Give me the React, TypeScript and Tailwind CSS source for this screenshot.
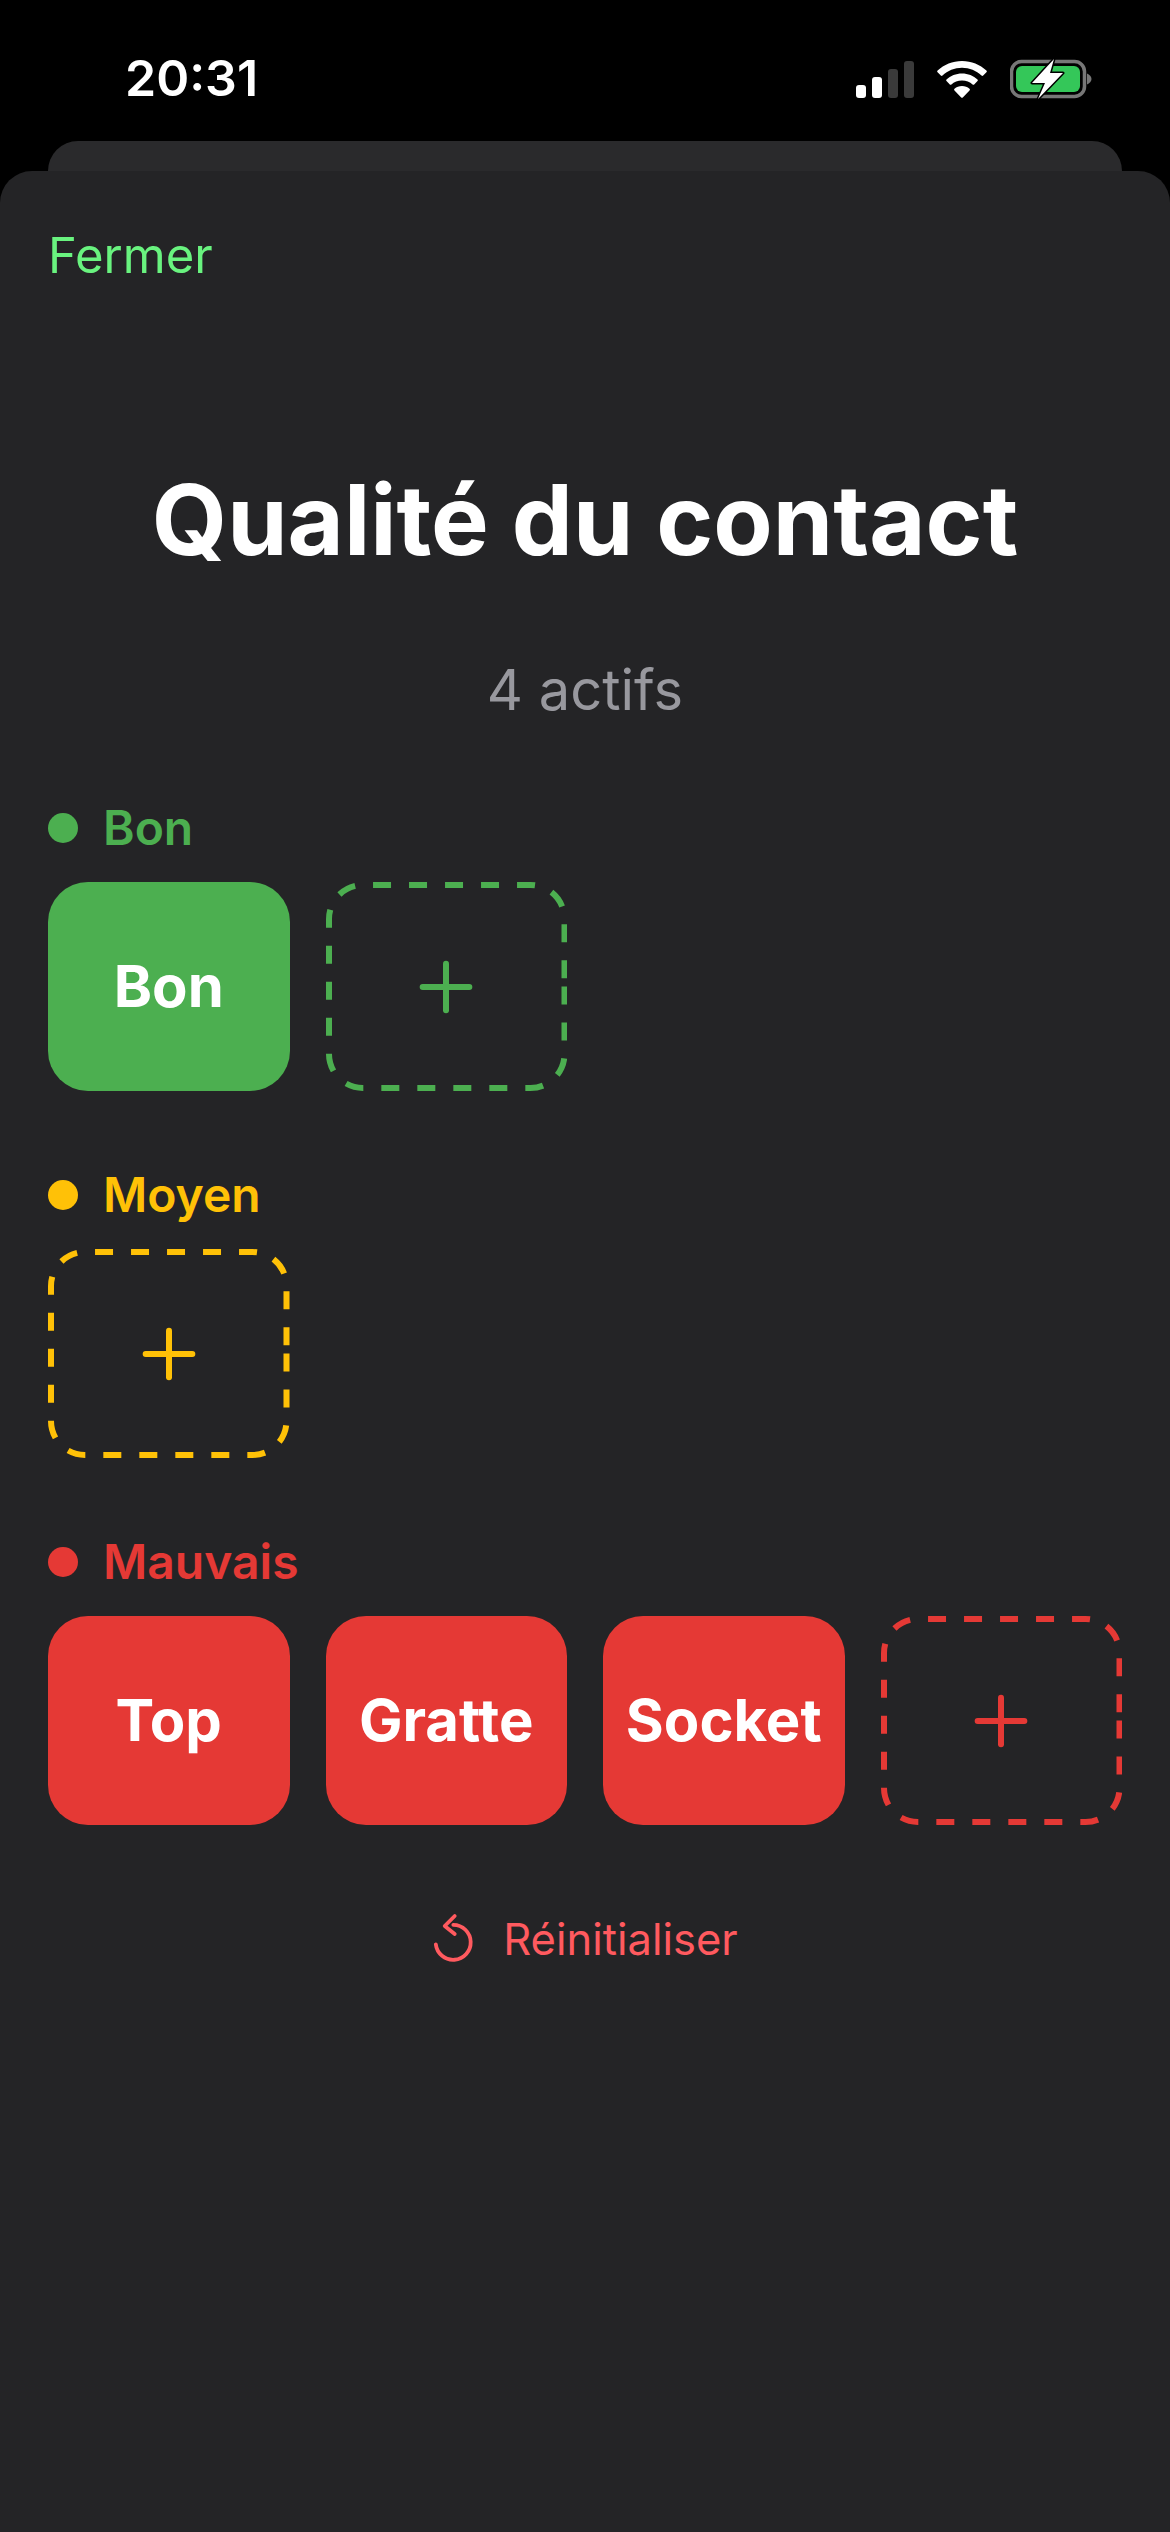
import React from 'react';
import { Plus } from 'lucide-react';

const StatusIcons = () => (
  <div className="flex items-end gap-[23px]">
    <div className="flex items-end gap-[6px]">
      <div className="w-[10px] h-[13px] rounded-[3px] bg-white" />
      <div className="w-[10px] h-[21px] rounded-[3px] bg-white" />
      <div className="w-[10px] h-[29px] rounded-[3px] bg-[#3a3a3a]" />
      <div className="w-[10px] h-[37px] rounded-[3px] bg-[#3a3a3a]" />
    </div>
    <svg width="50" height="37" viewBox="0 0 50 37" fill="#fff">
      <path d="M25 0C15.500 0 7 3.600 0.600 9.600a1.200 1.200 0 0 0 0 1.700l3.200 3.300a1.200 1.200 0 0 0 1.700 0C10.700 9.700 17.500 6.800 25 6.800s14.300 2.900 19.500 7.800a1.200 1.200 0 0 0 1.700 0l3.200-3.300a1.200 1.200 0 0 0 0-1.700C43 3.600 34.500 0 25 0z" />
      <path d="M25 12.400c-6 0-11.400 2.300-15.500 6a1.200 1.200 0 0 0 0 1.700l3.300 3.300a1.200 1.200 0 0 0 1.600 0c2.700-2.400 6.400-3.900 10.600-3.900s7.900 1.500 10.600 3.900a1.200 1.200 0 0 0 1.600 0l3.300-3.300a1.200 1.200 0 0 0 0-1.700c-4.100-3.700-9.500-6-15.500-6z" />
      <path d="M25 25c-2.900 0-5.500 1-7.500 2.800a1.100 1.100 0 0 0 0 1.600l6.700 7a1.100 1.100 0 0 0 1.600 0l6.700-7a1.100 1.100 0 0 0 0-1.600C30.500 26 27.900 25 25 25z" />
    </svg>
    <svg width="82" height="40" viewBox="0 0 82 40" className="mb-[-1px]">
      <rect x="1.500" y="2.500" width="73" height="35" rx="10" fill="none" stroke="#777" strokeWidth="3.500" />
      <rect x="6" y="7" width="64" height="26" rx="6" fill="#34c759" />
      <path d="M77 14.500c2.500 1 4.500 3 4.500 5.500s-2 4.500-4.500 5.500z" fill="#777" />
      <path d="M44 0 L22 24 H35 L28 40 L53 14 H40 Z" fill="#fff" stroke="#000" strokeWidth="3" strokeLinejoin="round" paintOrder="stroke" />
    </svg>
  </div>
);

const Tile = ({ label, bg }: { label: string; bg: string }) => (
  <button className={`h-[209px] rounded-[40px] flex items-center justify-center text-white text-[58px] font-bold ${bg}`}>{label}</button>
);

// dashed outline starts at the middle of the right edge, like the native border
const AddTile = ({ text }: { text: string }) => (
  <button className={`relative h-[209px] flex items-center justify-center ${text}`}>
    <svg className="absolute inset-0" width="241.5" height="209" viewBox="0 0 241.5 209" fill="none" stroke="currentColor" strokeWidth="6" strokeDasharray="18 18">
      <path d="M238.500 104.500V172A34 34 0 0 1 204.500 206H37A34 34 0 0 1 3 172V37A34 34 0 0 1 37 3H204.500A34 34 0 0 1 238.500 37V104.500" />
    </svg>
    <Plus size={80} strokeWidth={1.8} />
  </button>
);

const Section = ({ name, dot, text, children }: { name: string; dot: string; text: string; children: React.ReactNode }) => (
  <section>
    <div className="flex items-center gap-[25px] h-[54px]">
      <div className={`w-[30px] h-[30px] rounded-full ${dot}`} />
      <span className={`text-[48px] font-semibold ${text}`}>{name}</span>
    </div>
    <div className="grid grid-cols-4 gap-x-[36px] mt-[27px]">{children}</div>
  </section>
);

export default function App() {
  return (
    <div className="w-[1170px] h-[2532px] bg-black flex flex-col overflow-hidden font-['Inter',sans-serif]">
      <div className="h-[141px] flex items-start justify-between pl-[125px] pr-[78px] pt-[48px]">
        <span className="text-[50px] leading-[60px] font-semibold text-white">20:31</span>
        <div className="mt-[11px]"><StatusIcons /></div>
      </div>
      <div className="h-[30px] mx-[48px] rounded-t-[30px] bg-[#2a2a2c]" />
      <div className="flex-1 rounded-t-[32px] bg-[#242426] px-[48px]">
        <button className="block mt-[56px] text-[49px] leading-[58px] text-[#69f37f]">Fermer</button>
        <h1 className="mt-[177px] text-center text-[97px] leading-[116px] font-bold text-white">Qualité du contact</h1>
        <p className="mt-[78px] text-center text-[56px] leading-[68px] text-[#98989e]">4 actifs</p>
        <div className="mt-[77px] flex flex-col gap-[77px]">
          <Section name="Bon" dot="bg-[#4caf50]" text="text-[#4caf50]">
            <Tile label="Bon" bg="bg-[#4caf50]" />
            <AddTile text="text-[#4caf50]" />
          </Section>
          <Section name="Moyen" dot="bg-[#ffc107]" text="text-[#ffc107]">
            <AddTile text="text-[#ffc107]" />
          </Section>
          <Section name="Mauvais" dot="bg-[#e53935]" text="text-[#e53935]">
            <Tile label="Top" bg="bg-[#e53935]" />
            <Tile label="Gratte" bg="bg-[#e53935]" />
            <Tile label="Socket" bg="bg-[#e53935]" />
            <AddTile text="text-[#e53935]" />
          </Section>
        </div>
        <button className="mt-[87px] mx-auto flex items-center gap-[27px] text-[43.5px] leading-[54px] text-[#ff5a5f]">
          <svg width="44" height="52" viewBox="0 0 44 52" fill="none" stroke="currentColor" strokeWidth="3.800" strokeLinecap="round" strokeLinejoin="round">
            <path d="M3.800 31.300A17.500 17.500 0 1 0 21.300 11.800" />
            <path d="M22.700 3L12.700 13L22.700 21" />
          </svg>
          Réinitialiser
        </button>
      </div>
    </div>
  );
}
